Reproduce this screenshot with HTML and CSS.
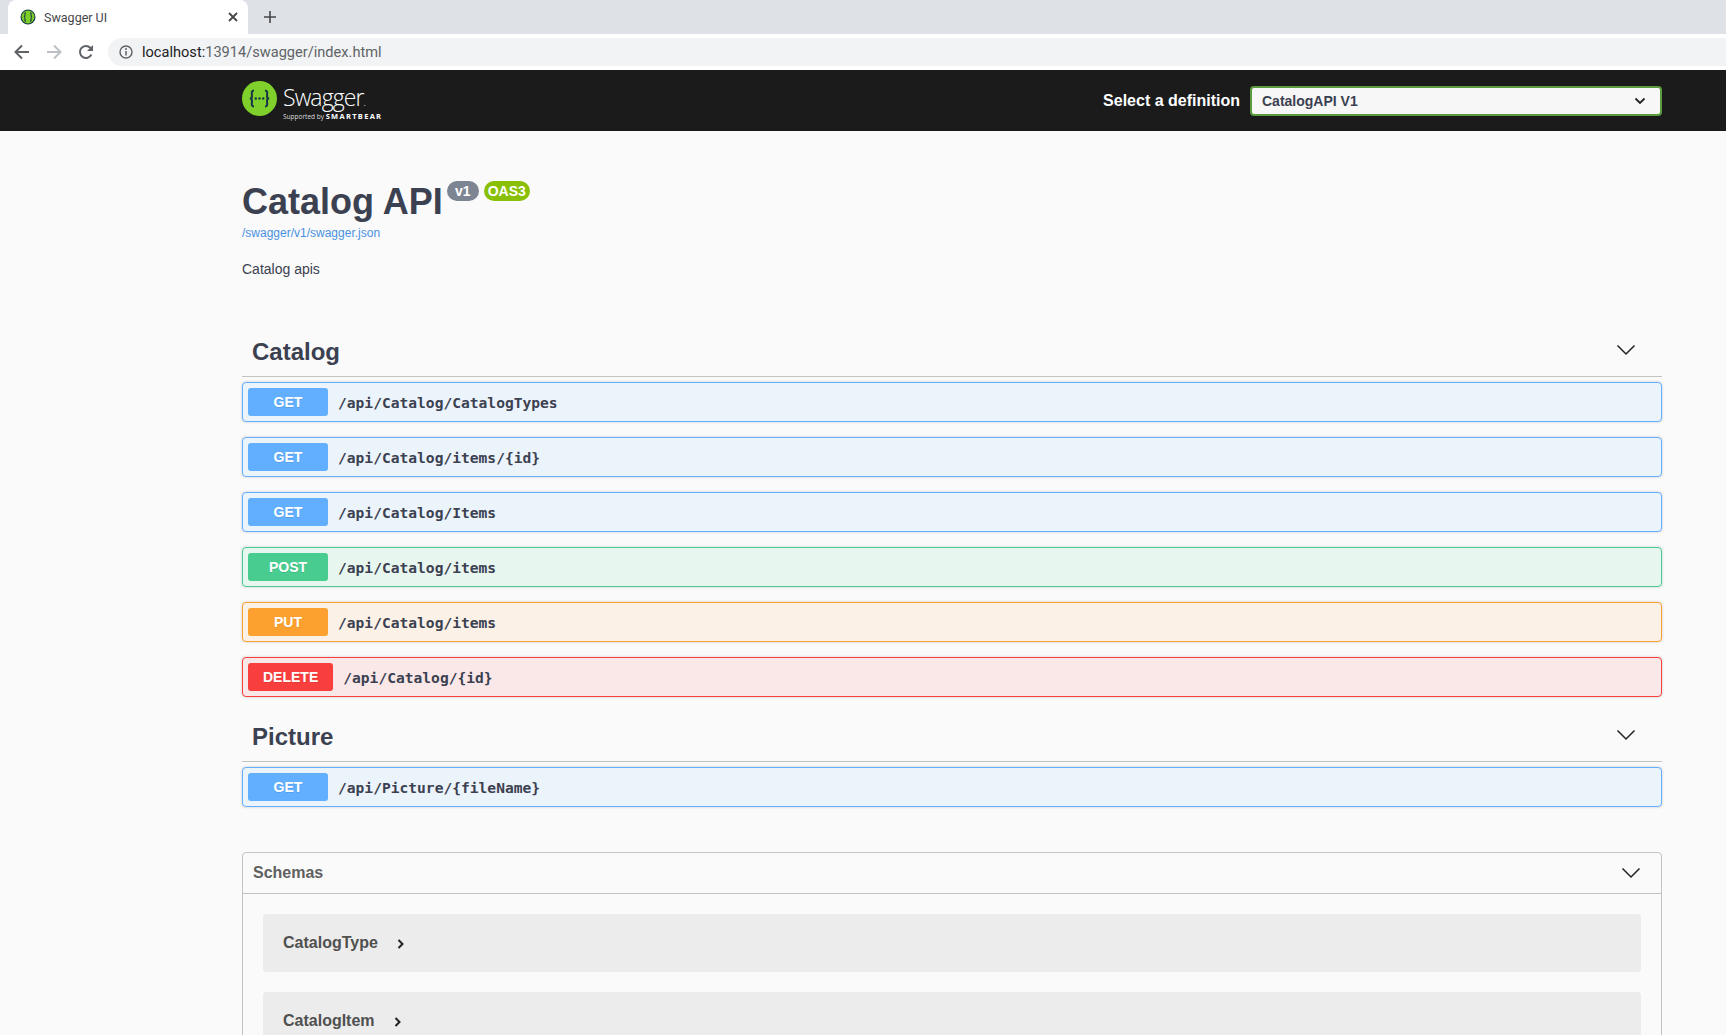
FILE: index.html
```html
<!DOCTYPE html>
<html lang="en">
<head>
<meta charset="utf-8">
<title>Swagger UI</title>
<link rel="stylesheet" href="styles.css">
</head>
<body>
<div class="browser">
  <div class="tabstrip">
    <div class="tab">
      <svg class="favicon" width="16" height="16" viewBox="0 0 16 16"><circle cx="8" cy="8" r="7.500" fill="#173646"/><circle cx="8" cy="8" r="6.400" fill="#7fd02b"/><path d="M6 3.800C4.600 3.800 5 5 5 6.300 5 7.400 4.500 8 3.800 8 4.500 8 5 8.600 5 9.700 5 11 4.600 12.200 6 12.200M10 3.800C11.400 3.800 11 5 11 6.300 11 7.400 11.500 8 12.200 8 11.500 8 11 8.600 11 9.700 11 11 11.400 12.200 10 12.200" fill="none" stroke="#173646" stroke-width="1.100"/></svg>
      <span class="tab-title">Swagger UI</span>
      <svg class="tab-close" width="10" height="10" viewBox="0 0 10 10"><path d="M1 1l8 8M9 1l-8 8" stroke="#45474a" stroke-width="1.800"/></svg>
    </div>
    <svg class="new-tab" width="12" height="12" viewBox="0 0 12 12"><path d="M6 0v12M0 6h12" stroke="#45474a" stroke-width="1.600"/></svg>
  </div>
  <div class="toolbar">
    <svg class="nav-icon" width="16" height="16" viewBox="0 0 16 16"><path d="M15 8H2M8 1.500L1.500 8 8 14.500" fill="none" stroke="#5f6368" stroke-width="2"/></svg>
    <svg class="nav-icon" width="16" height="16" viewBox="0 0 16 16"><path d="M1 8h13M8 1.500L14.500 8 8 14.500" fill="none" stroke="#bdc1c6" stroke-width="2"/></svg>
    <svg class="nav-icon" width="16" height="16" viewBox="0 0 16 16"><path d="M13.400 10.500A6 6 0 1 1 12.300 3.800L14.500 6" fill="none" stroke="#5f6368" stroke-width="2"/><path d="M15 1v6H9z" fill="#5f6368"/></svg>
    <div class="omnibox">
      <svg width="14" height="14" viewBox="0 0 14 14"><circle cx="7" cy="7" r="6" fill="none" stroke="#5f6368" stroke-width="1.400"/><path d="M7 6v4.500" stroke="#5f6368" stroke-width="1.500"/><circle cx="7" cy="4" r="1" fill="#5f6368"/></svg>
      <span class="url"><span class="url-host">localhost:</span>13914/swagger/index.html</span>
    </div>
  </div>
</div>

<header class="topbar">
  <div class="wrap topbar-inner">
    <div class="brand">
      <svg class="brand-logo" width="35" height="35" viewBox="0 0 35 35"><circle cx="17.500" cy="17.500" r="17.500" fill="#7fd02b"/><path d="M12 9.500C8.800 9.500 10 13 10 15.500 10 16.800 9.200 17.500 7.800 17.500 9.200 17.500 10 18.200 10 19.500 10 22 8.800 25.500 12 25.500M23 9.500C26.200 9.500 25 13 25 15.500 25 16.800 25.800 17.500 27.200 17.500 25.800 17.500 25 18.200 25 19.500 25 22 26.200 25.500 23 25.500" fill="none" stroke="#173646" stroke-width="2"/><circle cx="13.800" cy="17.500" r="1.200" fill="#173646"/><circle cx="17.500" cy="17.500" r="1.200" fill="#173646"/><circle cx="21.200" cy="17.500" r="1.200" fill="#173646"/></svg>
      <div class="brand-text">
        <span class="brand-name">Swagger<span class="brand-dot">.</span></span>
        <span class="brand-sub">Supported by <b class="brand-bear">SMARTBEAR</b></span>
      </div>
    </div>
    <div class="definition">
      <span class="definition-label">Select a definition</span>
      <div class="definition-select">
        <span>CatalogAPI V1</span>
        <svg width="12" height="8" viewBox="0 0 12 8"><path d="M1.500 1.500L6 6l4.500-4.500" fill="none" stroke="#222" stroke-width="1.800"/></svg>
      </div>
    </div>
  </div>
</header>

<main class="wrap">
  <section class="info">
    <h1 class="title">Catalog API <span class="badges"><span class="badge badge-version">v1</span><span class="badge badge-oas">OAS3</span></span></h1>
    <a class="spec-link" href="#">/swagger/v1/swagger.json</a>
    <p class="description">Catalog apis</p>
  </section>

  <section class="tag">
    <div class="tag-head">
      <h3>Catalog</h3>
      <svg width="20" height="12" viewBox="0 0 20 12"><path d="M1.500 1.500L10 10l8.500-8.500" fill="none" stroke="#222" stroke-width="1.500"/></svg>
    </div>
    <div class="op op-get"><span class="method">GET</span><span class="path">/api/Catalog/CatalogTypes</span></div>
    <div class="op op-get"><span class="method">GET</span><span class="path">/api/Catalog/items/{id}</span></div>
    <div class="op op-get"><span class="method">GET</span><span class="path">/api/Catalog/Items</span></div>
    <div class="op op-post"><span class="method">POST</span><span class="path">/api/Catalog/items</span></div>
    <div class="op op-put"><span class="method">PUT</span><span class="path">/api/Catalog/items</span></div>
    <div class="op op-delete"><span class="method">DELETE</span><span class="path">/api/Catalog/{id}</span></div>
  </section>

  <section class="tag tag-picture">
    <div class="tag-head">
      <h3>Picture</h3>
      <svg width="20" height="12" viewBox="0 0 20 12"><path d="M1.500 1.500L10 10l8.500-8.500" fill="none" stroke="#222" stroke-width="1.500"/></svg>
    </div>
    <div class="op op-get"><span class="method">GET</span><span class="path">/api/Picture/{fileName}</span></div>
  </section>

  <section class="schemas">
    <div class="schemas-head">
      <h4>Schemas</h4>
      <svg width="20" height="12" viewBox="0 0 20 12"><path d="M1.500 1.500L10 10l8.500-8.500" fill="none" stroke="#222" stroke-width="1.500"/></svg>
    </div>
    <div class="schemas-body">
      <div class="model"><span>CatalogType</span><svg width="8" height="10" viewBox="0 0 8 10"><path d="M1.500 1l4 4-4 4" fill="none" stroke="#222" stroke-width="2"/></svg></div>
      <div class="model"><span>CatalogItem</span><svg width="8" height="10" viewBox="0 0 8 10"><path d="M1.500 1l4 4-4 4" fill="none" stroke="#222" stroke-width="2"/></svg></div>
    </div>
  </section>
</main>
</body>
</html>
```
FILE: styles.css
```css
* { box-sizing: border-box; }
html, body { height: 1035px; overflow: hidden; }
body { margin: 0; background: #fafafa; color: #3b4151; font-family: "Liberation Sans", Arial, sans-serif; }
.browser { height: 70px; background: #fff; }
.tabstrip { height: 34px; background: #dee1e6; display: flex; align-items: center; padding-left: 8px; }
.tab { width: 240px; height: 34px; background: #fff; border-radius: 8px 8px 0 0; display: flex; align-items: center; padding: 0 10px 0 12px; }
.favicon { flex: none; }
.tab-title { flex: 1; margin-left: 8px; font: 12.500px Roboto, sans-serif; color: #45474a; }
.new-tab { margin-left: 16px; }
.toolbar { height: 36px; display: flex; align-items: center; padding-left: 14px; gap: 16px; }
.omnibox { flex: 1; height: 28px; margin-left: -2px; background: #f1f3f4; border-radius: 14px 0 0 14px; display: flex; align-items: center; padding-left: 11px; gap: 9px; }
.url { font: 14.600px Roboto, sans-serif; color: #5f6368; }
.url-host { color: #202124; }
.topbar { height: 61px; background: #1b1b1b; }
.wrap { width: 1420px; margin: 0 0 0 242px; }
.topbar-inner { height: 61px; display: flex; align-items: center; justify-content: space-between; }
.brand { display: flex; align-items: center; gap: 6px; color: #fff; }
.brand-logo { margin-bottom: 5px; }
.brand-text { display: flex; flex-direction: column; }
.brand-name { font: 300 23px/26px "Open Sans", sans-serif; letter-spacing: -.9px; margin-top: 3px; margin-bottom: -3px; }
.brand-dot { font-size: 10px; }
.brand-sub { font: 6.500px/8px "Open Sans", sans-serif; color: #ddd; }
.brand-bear { font-size: 7.500px; letter-spacing: 1.300px; color: #fff; }
.definition { display: flex; align-items: center; gap: 10px; }
.definition-label { font-size: 16px; font-weight: 700; color: #fff; }
.definition-select { width: 412px; height: 30px; background: #f7f7f7; border: 2px solid #5b9b3d; border-radius: 4px; display: flex; align-items: center; justify-content: space-between; padding: 0 14px 0 10px; font-size: 14px; font-weight: 700; color: #3b4151; }
.info { padding-top: 48px; }
.title { margin: 0; font-size: 36px; line-height: 45px; font-weight: 700; display: flex; white-space: pre; }
.badges { display: flex; gap: 5px; margin-left: -6px; padding-top: 2px; }
.badge { height: 20px; border-radius: 10px; font-size: 14px; line-height: 20px; color: #fff; font-weight: 700; text-align: center; }
.badge-version { width: 32px; background: #7d8492; }
.badge-oas { width: 46px; background: #89bf04; }
.spec-link { display: block; font-size: 12px; line-height: 14px; margin-top: 2px; color: #4990e2; text-decoration: none; }
.description { margin: 21px 0 0; font-size: 14px; line-height: 17px; }
.tag { margin-top: 50px; }
.tag-head { height: 49px; padding: 0 26px 0 10px; border-bottom: 1px solid #c3c3c3; display: flex; align-items: center; justify-content: space-between; }
.tag-head h3 { margin: 0; font-size: 24px; font-weight: 700; }
.tag-head svg { margin-bottom: 4px; }
.op { height: 40px; margin-top: 0; margin-bottom: 15px; border: 1px solid; border-radius: 4px; display: flex; align-items: center; padding: 0 5px; gap: 10px; box-shadow: 0 0 3px rgba(0,0,0,.19); }
.tag-head + .op { margin-top: 5px; }
.op:last-child { margin-bottom: 0; }
.method { min-width: 80px; height: 28px; padding: 0 15px; border-radius: 3px; color: #fff; font-size: 14px; font-weight: 700; line-height: 29px; text-align: center; text-shadow: 0 1px 0 rgba(0,0,0,.1); }
.path { font: 700 14.600px "DejaVu Sans Mono", monospace; color: #3b4151; padding-top: 0; }
.op-get { background: #ebf3fb; border-color: #61affe; }
.op-get .method { background: #61affe; }
.op-post { background: #e8f6f0; border-color: #49cc90; }
.op-post .method { background: #49cc90; }
.op-put { background: #fbf1e6; border-color: #fca130; }
.op-put .method { background: #fca130; }
.op-delete { background: #fae7e7; border-color: #f93e3e; }
.op-delete .method { background: #f93e3e; }
.tag-picture { margin-top: 16px; }
.schemas { margin-top: 45px; border: 1px solid #c3c3c3; border-radius: 4px; }
.schemas-head { height: 41px; padding: 0 20px 0 10px; border-bottom: 1px solid #c3c3c3; display: flex; align-items: center; justify-content: space-between; }
.schemas-head h4 { margin: 0; font-size: 16px; font-weight: 700; color: #606060; }
.schemas-body { padding: 20px 20px 0; display: flex; flex-direction: column; gap: 20px; }
.model { height: 58px; background: #ececec; border-radius: 4px; padding: 0 20px; display: flex; align-items: center; gap: 19px; font-size: 16px; font-weight: 700; color: #505050; flex: none; }
.model svg { margin-top: 2px; }
```
